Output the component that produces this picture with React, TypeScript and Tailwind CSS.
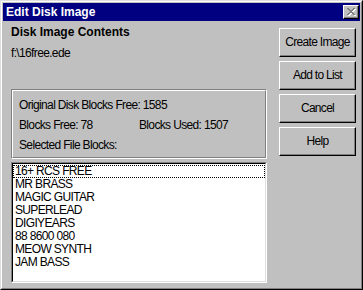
const items = [
  '16+ RCS FREE',
  'MR BRASS',
  'MAGIC GUITAR',
  'SUPERLEAD',
  'DIGIYEARS',
  '88 8600 080',
  'MEOW SYNTH',
  'JAM BASS'
]

const buttons = ['Create Image', 'Add to List', 'Cancel', 'Help']

// Win95-style disabled close glyph, 8x7 pixels
const xPixels = [
  [0, 0], [1, 0], [6, 0], [7, 0],
  [1, 1], [2, 1], [5, 1], [6, 1],
  [2, 2], [3, 2], [4, 2], [5, 2],
  [3, 3], [4, 3],
  [2, 4], [3, 4], [4, 4], [5, 4],
  [1, 5], [2, 5], [5, 5], [6, 5],
  [0, 6], [1, 6], [6, 6], [7, 6]
]

function CloseGlyph(): React.JSX.Element {
  return (
    <svg width="9" height="8" viewBox="0 0 9 8" shapeRendering="crispEdges">
      {xPixels.map(([x, y]) => (
        <rect key={`w${x}-${y}`} x={x + 1} y={y + 1} width="1" height="1" fill="#ffffff" />
      ))}
      {xPixels.map(([x, y]) => (
        <rect key={`g${x}-${y}`} x={x} y={y} width="1" height="1" fill="#808080" />
      ))}
    </svg>
  )
}

function Button({ label }: { label: string }): React.JSX.Element {
  return (
    <button className="flex h-[29px] w-[77px] items-center justify-center border border-b-black border-l-white border-r-black border-t-white bg-[#c0c0c0] text-[12px] leading-[13px] tracking-[-0.7px] text-black shadow-[inset_-1px_-1px_0_#808080]">
      {label}
    </button>
  )
}

export default function App(): React.JSX.Element {
  return (
    <div
      className="h-[290px] w-[363px] border border-b-black border-l-[#dfdfdf] border-r-black border-t-[#dfdfdf] bg-[#c0c0c0] text-black"
      style={{ fontFamily: '"Liberation Sans", Arial, sans-serif' }}
    >
      <div className="flex h-full flex-col border border-b-[#808080] border-l-white border-r-[#808080] border-t-white p-px">
        <header className="flex h-[18px] shrink-0 items-center justify-between bg-[#000080] pl-[3px] pr-[1px]">
          <span className="text-[12px] font-bold leading-[14px] text-white">Edit Disk Image</span>
          <div className="flex h-[14px] w-[16px] items-center justify-center border border-b-black border-l-white border-r-black border-t-white bg-[#c0c0c0] pl-px shadow-[inset_-1px_-1px_0_#808080]">
            <CloseGlyph />
          </div>
        </header>

        <div className="flex flex-1">
          <div className="flex w-[264px] flex-col pl-[8px]">
            <div className="mt-[4px] text-[12px] font-bold leading-[14px]">Disk Image Contents</div>
            <div className="mt-[8px] text-[12px] leading-[13px] tracking-[-0.65px]">f:\16free.ede</div>

            <div className="mt-[29px] h-[70px] w-[256px] border border-b-white border-l-[#808080] border-r-white border-t-[#808080]">
              <div className="h-full border border-b-[#808080] border-l-white border-r-[#808080] border-t-white pl-[6px] pt-[4px] text-[12px] leading-[20px] tracking-[-0.65px]">
                <div>Original Disk Blocks Free: 1585</div>
                <div className="grid grid-cols-[120px_1fr]">
                  <span>Blocks Free: 78</span>
                  <span>Blocks Used: 1507</span>
                </div>
                <div>Selected File Blocks:</div>
              </div>
            </div>

            <div className="mt-[3px] h-[121px] w-[256px] border border-b-white border-l-[#808080] border-r-white border-t-[#808080]">
              <ul className="h-full border border-b-[#dfdfdf] border-l-black border-r-[#dfdfdf] border-t-black bg-white pt-px text-[12px] leading-[13px] tracking-[-0.65px]">
                {items.map((item, i) => (
                  <li
                    key={item}
                    className={`h-[13px] pl-[2px] ${i === 0 ? 'outline-1 outline-dotted outline-black -outline-offset-1' : ''}`}
                  >
                    {item}
                  </li>
                ))}
              </ul>
            </div>
          </div>

          <div className="ml-[12px] mt-[7px] flex flex-col gap-[4px]">
            {buttons.map((b) => (
              <Button key={b} label={b} />
            ))}
          </div>
        </div>
      </div>
    </div>
  )
}
